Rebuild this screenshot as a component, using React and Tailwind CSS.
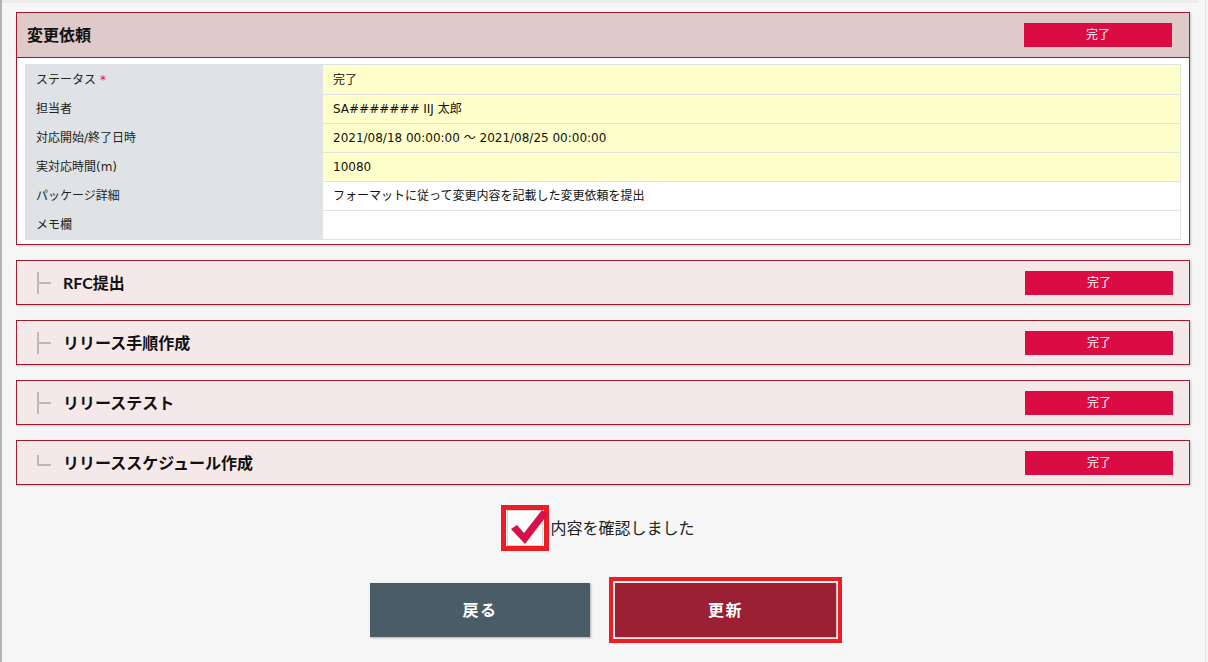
import { useState } from 'react';

const rows = [
  { label: 'ステータス', required: true, value: '完了', hl: true },
  { label: '担当者', value: 'SA####### IIJ 太郎', hl: true },
  { label: '対応開始/終了日時', value: '2021/08/18 00:00:00 ～ 2021/08/25 00:00:00', hl: true },
  { label: '実対応時間(m)', value: '10080', hl: true },
  { label: 'パッケージ詳細', value: 'フォーマットに従って変更内容を記載した変更依頼を提出', hl: false },
  { label: 'メモ欄', value: '', hl: false },
];

const steps = [
  { title: 'RFC提出', last: false },
  { title: 'リリース手順作成', last: false },
  { title: 'リリーステスト', last: false },
  { title: 'リリーススケジュール作成', last: true },
];

const cellFont = { fontFamily: '"DejaVu Sans", "Noto Sans CJK JP", sans-serif' };

function Badge() {
  return (
    <div className="w-[148px] h-6 bg-[#db0b43] text-white text-[12px] flex items-center justify-center">
      完了
    </div>
  );
}

function TreeLine({ last }) {
  return (
    <svg width="16" height="30" viewBox="0 0 16 30" className="shrink-0">
      {last ? (
        <path d="M2 7 V17 H15" fill="none" stroke="#b9b9b9" strokeWidth="2" />
      ) : (
        <path d="M2 4 V26 M2 15 H15" fill="none" stroke="#b9b9b9" strokeWidth="2" />
      )}
    </svg>
  );
}

export default function App() {
  const [checked, setChecked] = useState(true);

  return (
    <div
      className="min-h-[662px] bg-[#f6f6f6] border-l-2 border-[#b3b3b3] relative"
      style={{ fontFamily: '"Noto Sans", "Noto Sans CJK JP", sans-serif' }}
    >
      <div className="absolute top-0 left-0 right-[10px] h-[3px] bg-[#ececec]" />
      <div className="absolute top-0 bottom-0 right-[2px] w-px bg-[#e4e4e4]" />

      <div className="pt-3 pl-[14px] pr-[18px]">
        {/* Main card */}
        <div className="border border-[#9b1c2e] bg-white shadow-[1px_1px_2px_rgba(0,0,0,0.2)]">
          <div className="h-[45px] bg-[#dfc9c9] border-b border-[#9b1c2e] flex items-center justify-between pl-[10px] pr-[17px]">
            <h2 className="text-[16px] font-bold text-[#111]">変更依頼</h2>
            <Badge />
          </div>
          <div className="px-2 pt-[6px] pb-[4px]">
            <div className="border border-[#dde1e4]" style={cellFont}>
              {rows.map((r, i) => (
                <div
                  key={r.label}
                  className={`flex h-[29px] ${i > 0 ? 'border-t border-[#e2e2e2]' : ''}`}
                >
                  <div className="w-[297px] shrink-0 bg-[#dfe3e6] flex items-center pl-[10px] text-[12px] text-[#222]">
                    {r.label}
                    {r.required && <span className="text-[#e0105a] ml-1 text-[12px]">*</span>}
                  </div>
                  <div
                    className={`flex-1 flex items-center pl-[10px] text-[12px] text-[#111] ${r.hl ? 'bg-[#ffffcc]' : 'bg-white'}`}
                  >
                    {r.value}
                  </div>
                </div>
              ))}
            </div>
          </div>
        </div>

        {/* Step cards */}
        <div className="mt-[15px] flex flex-col gap-[15px]">
          {steps.map((s) => (
            <div
              key={s.title}
              className="h-[45px] border border-[#9b1c2e] bg-[#f5e8e8] shadow-[1px_1px_2px_rgba(0,0,0,0.2)] flex items-center justify-between pl-[19px] pr-[16px]"
            >
              <div className="flex items-center gap-[11px]">
                <TreeLine last={s.last} />
                <span
                  className="text-[16px] font-bold text-[#111]"
                  style={{ fontFamily: 'Lato, "Noto Sans CJK JP", sans-serif' }}
                >
                  {s.title}
                </span>
              </div>
              <Badge />
            </div>
          ))}
        </div>

        {/* Confirm checkbox */}
        <div className="mt-[20px] flex justify-center pr-[10px]">
          <label className="flex items-center cursor-pointer">
            <span className="w-12 h-[46px] border-[5px] border-[#ee1c25] bg-white flex items-center justify-center">
              <span
                className="relative w-[36px] h-[36px] border border-[#d4d4d4] bg-[#fbfbfb]"
                onClick={() => setChecked(!checked)}
              >
                {checked && (
                  <svg
                    width="40"
                    height="38"
                    viewBox="0 0 40 38"
                    className="absolute -top-[3px] left-0"
                  >
                    <path d="M3 21 L9 17 L16 25 L34 2 L40 6 L17 36 Z" fill="#d6124a" />
                  </svg>
                )}
              </span>
            </span>
            <span className="text-[16px] text-[#222] ml-px">内容を確認しました</span>
          </label>
        </div>

        {/* Buttons */}
        <div className="mt-[32px] flex justify-center gap-[25px]">
          <button className="w-[220px] h-[54px] bg-[#4a5c66] text-white text-[16px] font-bold tracking-widest shadow-[1px_1px_2px_rgba(0,0,0,0.3)]">
            戻る
          </button>
          <button className="w-[221px] h-[54px] bg-[#9b2033] text-white text-[16px] font-bold tracking-widest shadow-[1px_1px_2px_rgba(0,0,0,0.3)] outline-[4px] outline-solid outline-[#ee1c25] outline-offset-[2px]">
            更新
          </button>
        </div>
      </div>
    </div>
  );
}
